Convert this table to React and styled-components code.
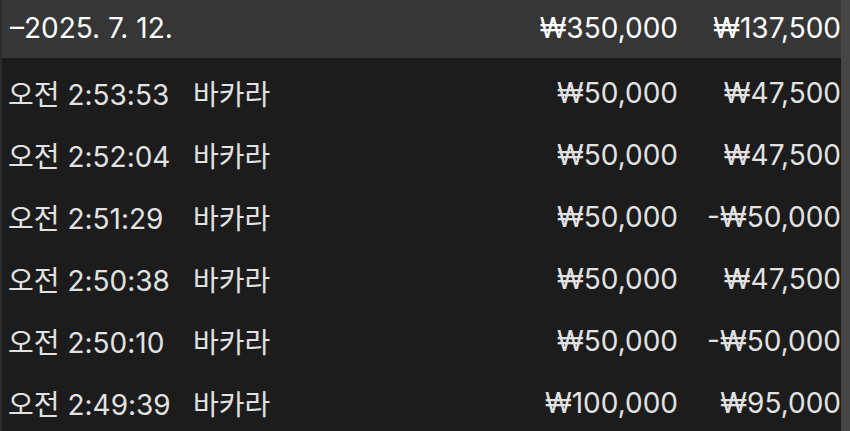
import React from 'react'
import styled, { createGlobalStyle } from 'styled-components'

const GlobalStyle = createGlobalStyle`
  html, body {
    margin: 0;
    padding: 0;
    background: #1c1c1e;
    overflow: hidden;
  }
  body {
    font-family: Inter, "Noto Sans CJK KR", sans-serif;
    -webkit-font-smoothing: antialiased;
  }
`

const Frame = styled.div`
  display: flex;
  width: 850px;
  height: 431px;
  overflow: hidden;
  background: #1c1c1c;
  border-left: 2px solid #2a2a2a;
  box-sizing: border-box;
`

const List = styled.div`
  flex: 1;
  display: flex;
  flex-direction: column;
  min-width: 0;
`

const Track = styled.div`
  width: 9px;
  flex-shrink: 0;
  background: #454545;
`

const Header = styled.div`
  display: flex;
  align-items: center;
  height: 58px;
  padding: 0 0 3px 8px;
  box-sizing: border-box;
  background: #363636;
  color: #ffffff;
  font-size: 28px;
  flex-shrink: 0;
`

const Rows = styled.div`
  display: flex;
  flex-direction: column;
  padding-top: 4px;
`

const Row = styled.div`
  display: flex;
  align-items: center;
  height: 62px;
  padding-left: 6px;
  color: #e2e2e2;
  font-size: 28px;
  flex-shrink: 0;
`

const Time = styled.span`
  width: 185px;
  flex-shrink: 0;
  white-space: nowrap;
`

const Game = styled.span`
  flex: 1;
  white-space: nowrap;
`

const DateLabel = styled.span`
  flex: 1;
  white-space: nowrap;
`

const Amount = styled.span`
  width: ${p => p.$w}px;
  flex-shrink: 0;
  text-align: right;
  white-space: nowrap;
`

const total = { date: '–2025. 7. 12.', bet: '₩350,000', result: '₩137,500' }

const rows = [
  { time: '오전 2:53:53', game: '바카라', bet: '₩50,000', result: '₩47,500' },
  { time: '오전 2:52:04', game: '바카라', bet: '₩50,000', result: '₩47,500' },
  { time: '오전 2:51:29', game: '바카라', bet: '₩50,000', result: '-₩50,000' },
  { time: '오전 2:50:38', game: '바카라', bet: '₩50,000', result: '₩47,500' },
  { time: '오전 2:50:10', game: '바카라', bet: '₩50,000', result: '-₩50,000' },
  { time: '오전 2:49:39', game: '바카라', bet: '₩100,000', result: '₩95,000' },
]

export default function App() {
  return (
    <>
      <GlobalStyle />
      <Frame>
        <List>
          <Header>
            <DateLabel>{total.date}</DateLabel>
            <Amount $w={200}>{total.bet}</Amount>
            <Amount $w={163}>{total.result}</Amount>
          </Header>
          <Rows>
            {rows.map((r, i) => (
              <Row key={i}>
                <Time>{r.time}</Time>
                <Game>{r.game}</Game>
                <Amount $w={200}>{r.bet}</Amount>
                <Amount $w={163}>{r.result}</Amount>
              </Row>
            ))}
          </Rows>
        </List>
        <Track />
      </Frame>
    </>
  )
}
